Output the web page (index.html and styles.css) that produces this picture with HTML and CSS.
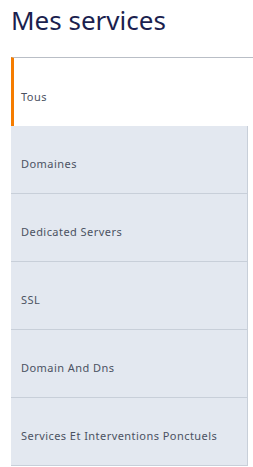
FILE: index.html
```html
<!DOCTYPE html>
<html lang="fr">

<head>
  <meta charset="UTF-8">
  <meta name="viewport" content="width=device-width, initial-scale=1.0">
  <title>Mes services</title>
  <link rel="stylesheet" href="styles.css">
</head>

<body>
  <h1 class="page-title">Mes services</h1>

  <!-- Liste des catégories -->
  <ul class="service-menu">
    <li class="menu-item active"><a href="#">Tous</a></li>
    <li class="menu-item"><a href="#">Domaines</a></li>
    <li class="menu-item"><a href="#">Dedicated Servers</a></li>
    <li class="menu-item"><a href="#">SSL</a></li>
    <li class="menu-item"><a href="#">Domain And Dns</a></li>
    <li class="menu-item"><a href="#">Services Et Interventions Ponctuels</a></li>
  </ul>
</body>

</html>
```

FILE: styles.css
```css
html,
body {
  margin: 0;
  padding: 0;
}

body {
  font-family: "Noto Sans", Arial, sans-serif;
  background-color: #ffffff;
  padding-left: 11px;
}

.page-title {
  margin: 0;
  padding-top: 4px;
  height: 53px;
  font-size: 26px;
  font-weight: 400;
  line-height: 32px;
  color: #1b1f4f;
}

.service-menu {
  list-style: none;
  margin: 0;
  padding: 0;
}

.menu-item {
  height: 67px;
  display: flex;
  align-items: center;
  margin-right: 5px;
  background-color: #e3e8f0;
  border-bottom: 1px solid #c8cfd9;
  border-right: 1px solid #c8cfd9;
}

.menu-item a {
  color: #4b5262;
  text-decoration: none;
  font-size: 11px;
  letter-spacing: 0.45px;
  padding-left: 10px;
  padding-top: 8px;
}

.menu-item.active {
  background-color: #ffffff;
  margin-right: 0;
  border-top: 1px solid #b9bec6;
  border-left: 3px solid #f57c00;
  border-right: none;
  border-bottom: none;
  height: 68px;
}

.menu-item.active a {
  padding-left: 7px;
}
```
